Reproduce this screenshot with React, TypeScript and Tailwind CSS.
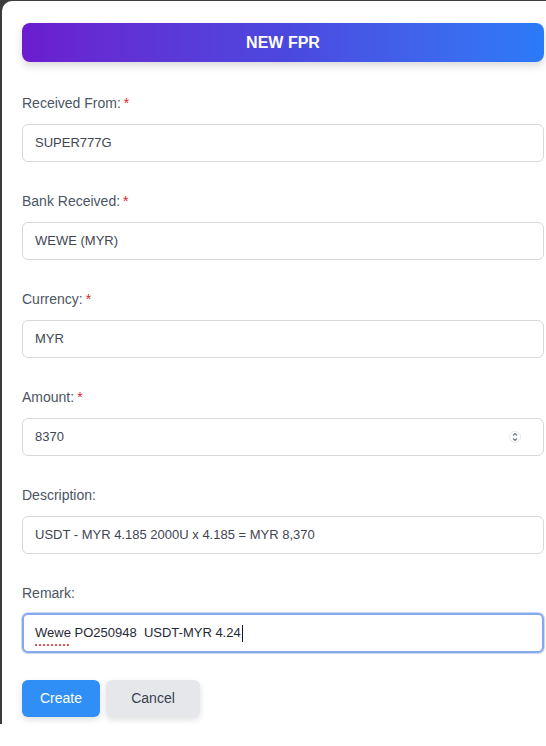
/**
 * App.tsx — New FPR form modal
 */

const fields = [
  { label: 'Received From:', value: 'SUPER777G', required: true },
  { label: 'Bank Received:', value: 'WEWE (MYR)', required: true },
  { label: 'Currency:', value: 'MYR', required: true },
  { label: 'Amount:', value: '8370', required: true, number: true },
  { label: 'Description:', value: 'USDT - MYR 4.185 2000U x 4.185 = MYR 8,370', required: false },
];

function Spinner() {
  return (
    <svg width="12" height="14" viewBox="0 0 12 14" className="absolute right-[22px] top-1/2 -translate-y-1/2">
      <circle cx="6" cy="7" r="5.5" fill="none" stroke="#e5e7eb" strokeWidth="1" />
      <path d="M4 5.5 L6 3.5 L8 5.5" fill="none" stroke="#6b7280" strokeWidth="1.1" />
      <path d="M4 8.5 L6 10.5 L8 8.5" fill="none" stroke="#6b7280" strokeWidth="1.1" />
    </svg>
  );
}

export default function App() {
  return (
    <div className="h-[746px] w-[546px] overflow-hidden bg-white font-['Liberation_Sans',Arial,sans-serif]">
      <div className="h-[724px] bg-[#3c3c3c] pl-[2px] pt-[1px]">
        <div className="h-full rounded-tl-[10px] bg-white pl-[20px] pr-[2px] pt-[22px]">
          {/* Header */}
          <div className="flex h-[39px] items-center justify-center rounded-lg bg-linear-to-r from-[#6b1ccf] via-[#4b47df] to-[#2a7bf8] text-[16px] font-bold text-white shadow-[0_4px_8px_rgba(0,0,0,0.15)]">
            NEW FPR
          </div>

          <div className="mt-[31px]">
            {fields.map((f) => (
              <div key={f.label} className="mb-[29px]">
                <div className="mb-[11px] text-[14px] leading-5 text-[#4b5563]">
                  {f.label}
                  {f.required && <span className="ml-[3px] text-[#e11d2e]">*</span>}
                </div>
                <div className="relative flex h-[38px] items-center rounded-[6px] border border-[#d6d8dc] bg-white px-[12px] text-[13px] text-[#3f4653]">
                  {f.value}
                  {f.number && <Spinner />}
                </div>
              </div>
            ))}

            {/* Remark (focused) */}
            <div>
              <div className="mb-[10px] text-[14px] leading-5 text-[#4b5563]">Remark:</div>
              <div className="flex h-[40px] items-center rounded-[6px] border-2 border-[#86a9ee] bg-white px-[11px] text-[13px] text-[#1f2937] shadow-[0_0_0_1px_rgba(147,180,245,0.5)]">
                <span className="relative">
                  Wewe
                  <span className="absolute bottom-[-3px] left-0 right-[2px] border-b-2 border-dotted border-[#f05252]" />
                </span>
                <span className="whitespace-pre"> PO250948  USDT-MYR 4.24</span>
                <span className="ml-[1px] h-[17px] w-[1.5px] bg-[#111827]" />
              </div>
            </div>

            {/* Actions */}
            <div className="mt-[27px] flex gap-[6px]">
              <button className="h-[37px] w-[78px] rounded-[6px] bg-[#2f8ff7] text-[14px] font-medium text-white shadow-[0_3px_6px_rgba(0,0,0,0.12)]">
                Create
              </button>
              <button className="h-[37px] w-[94px] rounded-[6px] bg-[#e5e7eb] text-[14px] text-[#374151] shadow-[0_3px_6px_rgba(0,0,0,0.12)]">
                Cancel
              </button>
            </div>
          </div>
        </div>
      </div>
    </div>
  );
}
